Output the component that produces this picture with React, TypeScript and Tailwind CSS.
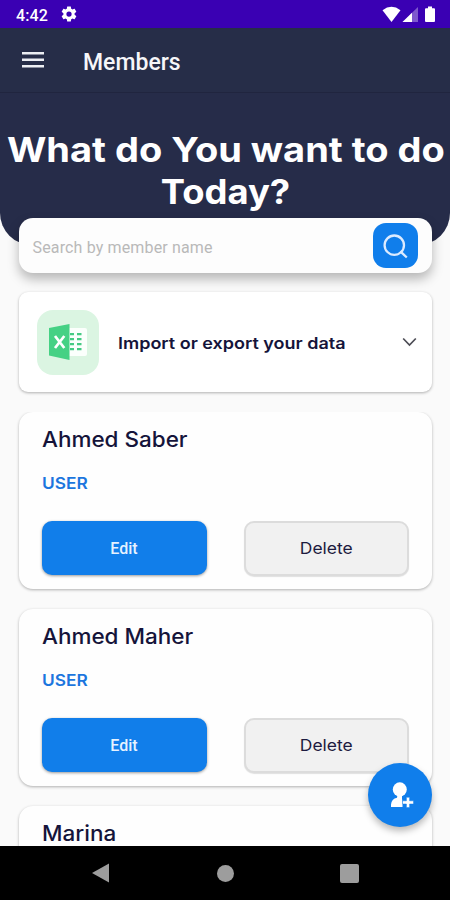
import React from "react";

const members = [
  { name: "Ahmed Saber", open: true },
  { name: "Ahmed Maher", open: true },
  { name: "Marina", open: false },
];

function StatusBar() {
  return (
    <div className="flex h-7 shrink-0 items-center bg-[#3a00b3] pl-4 pr-[15px] text-white">
      <span className="w-8 whitespace-nowrap pt-[3px] font-['Roboto',sans-serif] text-[16px] font-medium leading-none tracking-[0.1px]">4:42</span>
      <svg className="ml-[12px] h-[18px] w-[18px]" viewBox="0 0 24 24" fill="white">
        <path fillRule="evenodd" d="M19.43 12.98c.04-.32.07-.64.07-.98s-.03-.66-.07-.98l2.11-1.65c.19-.15.24-.42.12-.64l-2-3.46c-.12-.22-.39-.3-.61-.22l-2.49 1c-.52-.4-1.08-.73-1.69-.98l-.38-2.65C14.46 2.18 14.25 2 14 2h-4c-.25 0-.46.18-.49.42l-.38 2.65c-.61.25-1.17.59-1.69.98l-2.49-1c-.23-.09-.49 0-.61.22l-2 3.46c-.13.22-.07.49.12.64l2.11 1.65c-.04.32-.07.65-.07.98s.03.66.07.98l-2.11 1.65c-.19.15-.24.42-.12.64l2 3.46c.12.22.39.3.61.22l2.49-1c.52.4 1.08.73 1.69.98l.38 2.65c.03.24.24.42.49.42h4c.25 0 .46-.18.49-.42l.38-2.65c.61-.25 1.17-.59 1.69-.98l2.49 1c.23.09.49 0 .61-.22l2-3.46c.12-.22.07-.49-.12-.64zM12 15.5a3.5 3.5 0 1 1 0-7 3.5 3.5 0 0 1 0 7z" />
      </svg>
      <svg className="ml-auto h-[17px] w-[19px]" viewBox="0 0 19 17" fill="white">
        <path d="M0.5 4.2Q9.5-2.6 18.5 4.2L9.5 16z" />
      </svg>
      <svg className="ml-[1px] h-[16px] w-[16px]" viewBox="0 0 16 16">
        <path d="M16 1V16H0.5z" fill="white" fillOpacity=".35" />
        <path d="M10 6.8V16H0.5z" fill="white" />
      </svg>
      <svg className="ml-[7px] h-[17px] w-[10px]" viewBox="0 0 10 17" fill="white">
        <path d="M3 0.5h4v1.7h2q1 0 1 1V15q0 1-1 1H1q-1 0-1-1V3.2q0-1 1-1h2z" />
      </svg>
    </div>
  );
}

function SearchCard() {
  return (
    <div className="relative mx-auto -mt-[27px] flex h-[55px] w-[413px] items-center rounded-[14px] bg-[#fdfdfd] pl-[14px] pr-[14px] shadow-[0_6px_12px_rgba(0,0,0,0.28)]">
      <span className="whitespace-nowrap pt-[5px] font-['Roboto',sans-serif] text-[16px] leading-none tracking-[0.15px] text-[#b9b9b9]">Search by member name</span>
      <button className="ml-auto flex h-[45px] w-[45px] items-center justify-center rounded-[13px] bg-[#107eeb]">
        <svg className="h-[26px] w-[26px]" viewBox="0 0 26 26" fill="none" stroke="#dcebff" strokeWidth="2.3">
          <circle cx="12.300" cy="12.200" r="9.700" />
          <path d="M18.300 18.300L24.800 24.500" />
        </svg>
      </button>
    </div>
  );
}

function ExcelIcon() {
  return (
    <svg className="h-[38px] w-[40px]" viewBox="0 0 40 38">
      <path d="M19 5h18q2 0 2 2v24q0 2-2 2H19z" fill="#fbfffc" />
      <path d="M22 10h4v2.200H22zM29 10h4.500v2.200H29zM22 15h4v2.200H22zM29 15h4.500v2.200H29zM22 20h4v2.200H22zM29 20h4.500v2.200H29zM22 25h4v2.200H22zM29 25h4.500v2.200H29z" fill="#45ca83" />
      <path d="M1 5L21.500 1V37L1 32.500z" fill="#45d184" />
      <path d="M7 13L16.300 25M16.300 13L7 25" stroke="white" strokeWidth="2.700" fill="none" />
    </svg>
  );
}

function ImportCard() {
  return (
    <div className="mx-auto mt-[19px] flex h-[100px] w-[413px] shrink-0 items-center rounded-[9px] bg-white pl-[18px] pr-[15px] shadow-[0_1px_3px_rgba(0,0,0,0.3)]">
      <div className="flex h-[65px] w-[62px] items-center justify-center rounded-[16px] bg-[#dbf5e2]">
        <ExcelIcon />
      </div>
      <span className="ml-[19px] origin-left scale-x-[1.124] whitespace-nowrap pt-[2px] font-['Inter',sans-serif] text-[16px] font-semibold leading-none text-[#15143a]">Import or export your data</span>
      <svg className="ml-auto h-[10px] w-[15px]" viewBox="0 0 15 10" fill="none" stroke="#4d4d55" strokeWidth="1.7">
        <path d="M1.200 1.500L7.500 8L13.800 1.500" />
      </svg>
    </div>
  );
}

function MemberCard({ name, open }: { name: string; open: boolean }) {
  return (
    <div className="mx-auto mb-5 flex h-[177px] w-[413px] shrink-0 flex-col rounded-[14px] bg-[#fefefe] px-[23px] pt-[16px] shadow-[0_1px_3px_rgba(0,0,0,0.3)]">
      <h2 className="h-[24px] origin-left scale-x-[1.07] self-start whitespace-nowrap font-['Inter',sans-serif] text-[21px] font-medium leading-[23px] text-[#15143a]">{name}</h2>
      {open && (
        <>
          <span className="mt-[21px] h-[20px] origin-left scale-x-[1.08] self-start font-['Inter',sans-serif] text-[16px] font-semibold leading-[20px] text-[#1c76de]">USER</span>
          <div className="mt-[28px] flex justify-between">
            <button className="h-[54px] w-[165px] rounded-[10px] bg-[#117eea] pt-px font-['Roboto',sans-serif] text-[16px] font-medium text-[#e6f2ff] shadow-[0_1px_3px_rgba(0,0,0,0.4)]">Edit</button>
            <button className="h-[55px] w-[165px] rounded-[10px] border-2 border-[#dcdcdc] bg-[#f1f1f1] pb-px font-['Inter',sans-serif] text-[16px] text-[#1d1b40] shadow-[0_1px_1px_rgba(0,0,0,0.12)]">
              <span className="inline-block scale-x-[1.09]">Delete</span>
            </button>
          </div>
        </>
      )}
    </div>
  );
}

export default function App() {
  return (
    <div className="relative flex h-[900px] w-[450px] flex-col overflow-hidden bg-[#fafafa]">
      <StatusBar />
      <header className="shrink-0 rounded-b-[32px] bg-[#262c49]">
        <div className="flex h-[65px] items-center border-b border-[#20253f] bg-[#262d48] pl-[22px]">
          <svg className="h-[16px] w-[22px]" viewBox="0 0 22 16" fill="#eceef3">
            <path d="M0 0h22v2.500H0zM0 6.500h22v2.500H0zM0 13h22v2.500H0z" />
          </svg>
          <h1 className="ml-[39px] pt-[5px] font-['Roboto',sans-serif] text-[23px] font-medium leading-none text-[#f6f6f9]">Members</h1>
        </div>
        <div className="flex h-[152px] flex-col items-center whitespace-nowrap pl-px pt-[36px] font-['Inter',sans-serif] text-[34px] font-bold leading-[42px] text-white">
          <div className="scale-x-[1.118]">What do You want to do</div>
          <div className="scale-x-[1.07]">Today?</div>
        </div>
      </header>
      <SearchCard />
      <ImportCard />
      <main className="mt-5 flex min-h-0 flex-1 flex-col overflow-hidden">
        {members.map((m) => (
          <MemberCard key={m.name} name={m.name} open={m.open} />
        ))}
      </main>
      <nav className="relative flex h-[54px] shrink-0 items-center bg-black">
        <svg className="ml-[92px] h-[20px] w-[17px]" viewBox="0 0 17 20" fill="#9d9d9d">
          <path d="M0 10L17 0.500V19.500z" />
        </svg>
        <div className="ml-[108px] h-[17px] w-[17px] rounded-full bg-[#9d9d9d]" />
        <div className="ml-[106px] h-[19px] w-[19px] rounded-[2px] bg-[#9d9d9d]" />
      </nav>
      <button className="absolute left-[368px] top-[763px] flex h-16 w-16 items-center justify-center rounded-full bg-[#107eeb] shadow-[0_4px_7px_rgba(0,0,0,0.28)]">
        <svg className="ml-[4px] h-[26px] w-[24px]" viewBox="0 0 24 26" fill="white">
          <ellipse cx="9.800" cy="7.500" rx="7" ry="7.200" />
          <path d="M7.500 13h4.500v3.500l.5 4.500V25H1V22.500Q1.500 17 7 15.800z" />
          <path d="M16.400 15.300h3.200v3.500h3.900v3.200h-3.900v3.600h-3.200v-3.600h-3.900v-3.200h3.900z" stroke="#107eeb" strokeWidth=".5" />
        </svg>
      </button>
    </div>
  );
}
